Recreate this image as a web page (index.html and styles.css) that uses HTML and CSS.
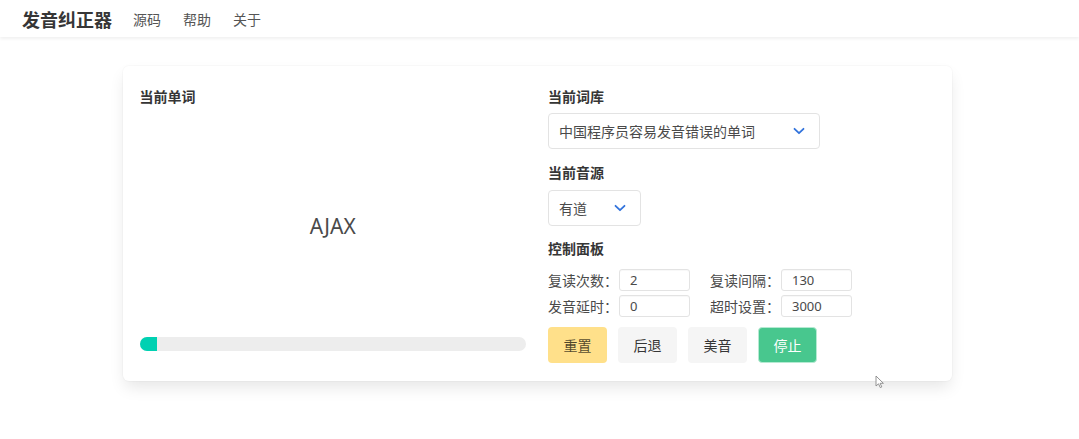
FILE: index.html
```html
<!DOCTYPE html>
<html lang="zh-CN">
<head>
<meta charset="utf-8">
<title>发音纠正器</title>
<link rel="stylesheet" href="styles.css">
</head>
<body>
<nav class="navbar">
  <span class="brand">发音纠正器</span>
  <a class="nav-link" href="#">源码</a>
  <a class="nav-link" href="#">帮助</a>
  <a class="nav-link" href="#">关于</a>
</nav>
<main class="page">
  <section class="card">
    <div class="col col-left">
      <h3 class="label">当前单词</h3>
      <div class="word">AJAX</div>
      <div class="progress"><div class="progress-fill" style="width:17px"></div></div>
    </div>
    <div class="col col-right">
      <h3 class="label">当前词库</h3>
      <div class="select select-wide">
        <span>中国程序员容易发音错误的单词</span>
        <svg class="chev" viewBox="0 0 12 8" width="12" height="8"><path d="M1.5 1.8 L6 6.2 L10.5 1.8" fill="none" stroke="#3273dc" stroke-width="1.8" stroke-linecap="round" stroke-linejoin="round"/></svg>
      </div>
      <h3 class="label label-gap">当前音源</h3>
      <div class="select select-small">
        <span>有道</span>
        <svg class="chev" viewBox="0 0 12 8" width="12" height="8"><path d="M1.5 1.8 L6 6.2 L10.5 1.8" fill="none" stroke="#3273dc" stroke-width="1.8" stroke-linecap="round" stroke-linejoin="round"/></svg>
      </div>
      <h3 class="label label-gap2">控制面板</h3>
      <div class="controls">
        <div class="field">
          <span class="field-label">复读次数：</span>
          <input class="input" type="text" value="2">
        </div>
        <div class="field">
          <span class="field-label">复读间隔：</span>
          <input class="input" type="text" value="130">
        </div>
        <div class="field">
          <span class="field-label">发音延时：</span>
          <input class="input" type="text" value="0">
        </div>
        <div class="field">
          <span class="field-label">超时设置：</span>
          <input class="input" type="text" value="3000">
        </div>
      </div>
      <div class="buttons">
        <button class="btn btn-warning">重置</button>
        <button class="btn btn-light">后退</button>
        <button class="btn btn-light">美音</button>
        <button class="btn btn-success">停止</button>
      </div>
    </div>
  </section>
</main>
<svg class="cursor" viewBox="0 0 10 14" width="10" height="14"><path d="M1 1 L1 11 L3.5 8.8 L5.3 12.6 L6.8 11.9 L5.1 8.3 L8.4 8.3 Z" fill="#fff" stroke="#888" stroke-width="0.9" stroke-linejoin="round"/></svg>
</body>
</html>
```
FILE: styles.css
```css
* { box-sizing: border-box; }
html, body { margin: 0; padding: 0; background: #fff; }
body {
  font-family: "Noto Sans", "Noto Sans CJK SC", sans-serif;
  color: #4a4a4a;
  font-size: 14px;
  position: relative;
  height: 439px;
  overflow: hidden;
}
.navbar {
  height: 37px;
  display: flex;
  align-items: center;
  padding-left: 22px;
  background: #fff;
  box-shadow: 0 2px 3px rgba(10,10,10,0.06);
}
.brand {
  font-family: "Noto Sans CJK SC", sans-serif;
  font-weight: 700;
  font-size: 18px;
  color: #363636;
  margin-right: 21px;
}
.nav-link {
  font-family: "Noto Sans CJK SC", sans-serif;
  font-size: 14px;
  color: #555;
  text-decoration: none;
  margin-right: 22px;
}
.page {
  padding-top: 29px;
  display: flex;
  justify-content: center;
}
.card {
  width: 829px;
  margin-left: -5px;
  height: 315px;
  background: #fff;
  border-radius: 6px;
  box-shadow: 0 8px 16px -2px rgba(10,10,10,0.1), 0 0 0 1px rgba(10,10,10,0.02);
  padding: 20px 17px 18px 17px;
  display: flex;
  gap: 22px;
}
.col { flex: 1; display: flex; flex-direction: column; }
.label {
  margin: 0;
  font-family: "Noto Sans CJK SC", sans-serif;
  font-size: 14px;
  font-weight: 700;
  line-height: 20px;
  color: #363636;
}
.word {
  flex: 1;
  display: flex;
  align-items: center;
  justify-content: center;
  font-size: 21px;
  color: #4a4a4a;
  padding-top: 8px;
}
.progress {
  height: 14px;
  border-radius: 7px;
  background: #ededed;
  overflow: hidden;
  margin-bottom: 12px;
}
.progress-fill { height: 100%; background: #00d1b2; }
.col-right .label:first-child { margin-bottom: 7px; }
.select {
  height: 36px;
  border: 1px solid #e3e3e3;
  border-radius: 4px;
  display: flex;
  align-items: center;
  justify-content: space-between;
  padding: 0 14px 0 10px;
  font-family: "Noto Sans CJK SC", sans-serif;
  font-size: 14px;
  color: #4a4a4a;
}
.select-wide { width: 272px; }
.select-small { width: 93px; }
.chev { display: block; }
.label-gap { margin-top: 13px; margin-bottom: 8px; }
.label-gap2 { margin-top: 12px; margin-bottom: 11px; }
.controls {
  display: grid;
  grid-template-columns: 162px 150px;
  row-gap: 4px;
}
.field { display: flex; align-items: center; height: 22px; }
.field-label {
  font-family: "Noto Sans CJK SC", sans-serif;
  font-size: 14px;
  color: #4a4a4a;
  width: 71px;
  white-space: nowrap;
  overflow: hidden;
}
.input {
  width: 71px;
  height: 22px;
  border: 1px solid #e3e3e3;
  border-radius: 3px;
  padding: 0 10px;
  font-family: "Noto Sans", sans-serif;
  font-size: 13px;
  color: #4a4a4a;
  outline: none;
  box-shadow: inset 0 1px 1px rgba(10,10,10,0.03);
}
.buttons {
  display: flex;
  gap: 11px;
  margin-top: 10px;
}
.btn {
  height: 36px;
  padding: 0 14.5px;
  border-radius: 4px;
  border: 1px solid transparent;
  font-family: "Noto Sans CJK SC", sans-serif;
  font-size: 14px;
  cursor: pointer;
}
.btn-warning { background: #ffe08a; color: rgba(0,0,0,0.7); }
.btn-light { background: #f5f5f5; color: #363636; }
.btn-success {
  background: #48c78e;
  color: #fff;
  border-color: #b5ead2;
}
.cursor { position: absolute; left: 875px; top: 375px; }
```
